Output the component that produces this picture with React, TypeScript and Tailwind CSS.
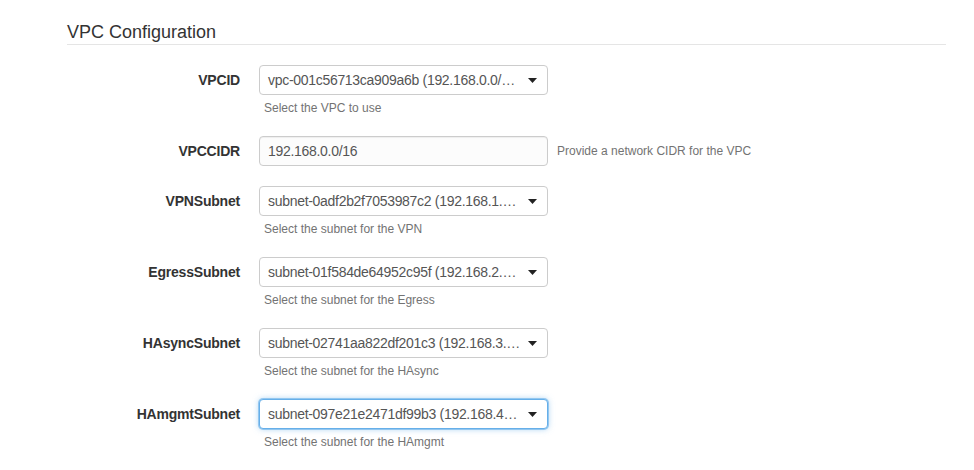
const font = { fontFamily: '"Liberation Sans", Arial, Helvetica, sans-serif' }

interface Field {
  label: string
  value: string
  help?: string
  inlineHelp?: string
  kind: 'select' | 'input'
  focused?: boolean
}

const fields: Field[] = [
  { label: 'VPCID', value: 'vpc-001c56713ca909a6b (192.168.0.0/…', help: 'Select the VPC to use', kind: 'select' },
  { label: 'VPCCIDR', value: '192.168.0.0/16', inlineHelp: 'Provide a network CIDR for the VPC', kind: 'input' },
  { label: 'VPNSubnet', value: 'subnet-0adf2b2f7053987c2 (192.168.1.…', help: 'Select the subnet for the VPN', kind: 'select' },
  { label: 'EgressSubnet', value: 'subnet-01f584de64952c95f (192.168.2.…', help: 'Select the subnet for the Egress', kind: 'select' },
  { label: 'HAsyncSubnet', value: 'subnet-02741aa822df201c3 (192.168.3.…', help: 'Select the subnet for the HAsync', kind: 'select' },
  { label: 'HAmgmtSubnet', value: 'subnet-097e21e2471df99b3 (192.168.4…', help: 'Select the subnet for the HAmgmt', kind: 'select', focused: true },
]

function Caret() {
  return (
    <svg width="9" height="5" viewBox="0 0 9 5" className="shrink-0">
      <path d="M0 0 L9 0 L4.5 5 Z" fill="#222" />
    </svg>
  )
}

function FormRow({ field }: { field: Field }) {
  const border = field.focused
    ? 'border-[#66afe9] shadow-[0_0_0_1px_rgba(102,175,233,0.6),0_0_6px_rgba(102,175,233,0.6)]'
    : 'border-[#cccccc]'
  return (
    <div className="flex items-start mb-5">
      <div className="w-[173px] h-[30px] flex items-center justify-end text-sm font-bold text-[#333] tracking-[-0.2px]">
        {field.label}
      </div>
      <div className="ml-[19px] w-[289px]">
        {field.kind === 'select' ? (
          <div className={`h-[30px] flex items-center rounded border bg-white pl-[8px] pr-[10px] ${border}`}>
            <span className="flex-1 min-w-0 whitespace-nowrap text-sm text-[#555] tracking-[-0.3px]">{field.value}</span>
            <Caret />
          </div>
        ) : (
          <div className="h-[30px] flex items-center rounded border border-[#cccccc] bg-[#fcfcfc] px-[8px] shadow-[inset_0_1px_1px_rgba(0,0,0,0.06)]">
            <span className="text-sm text-[#555] tracking-[-0.3px]">{field.value}</span>
          </div>
        )}
        {field.help && (
          <div className="mt-[5px] pl-[5px] text-xs leading-4 text-[#737373]">{field.help}</div>
        )}
      </div>
      {field.inlineHelp && (
        <div className="ml-[9px] h-[30px] flex items-center text-xs text-[#737373]">{field.inlineHelp}</div>
      )}
    </div>
  )
}

export default function App() {
  return (
    <div className="w-[974px] h-[470px] bg-white overflow-hidden pl-[67px] pr-[28px] pt-[22px]" style={font}>
      <h4 className="text-lg leading-5 text-[#333] pb-[2px] border-b border-[#e5e5e5]">VPC Configuration</h4>
      <div className="mt-5">
        {fields.map((f) => (
          <FormRow key={f.label} field={f} />
        ))}
      </div>
    </div>
  )
}
